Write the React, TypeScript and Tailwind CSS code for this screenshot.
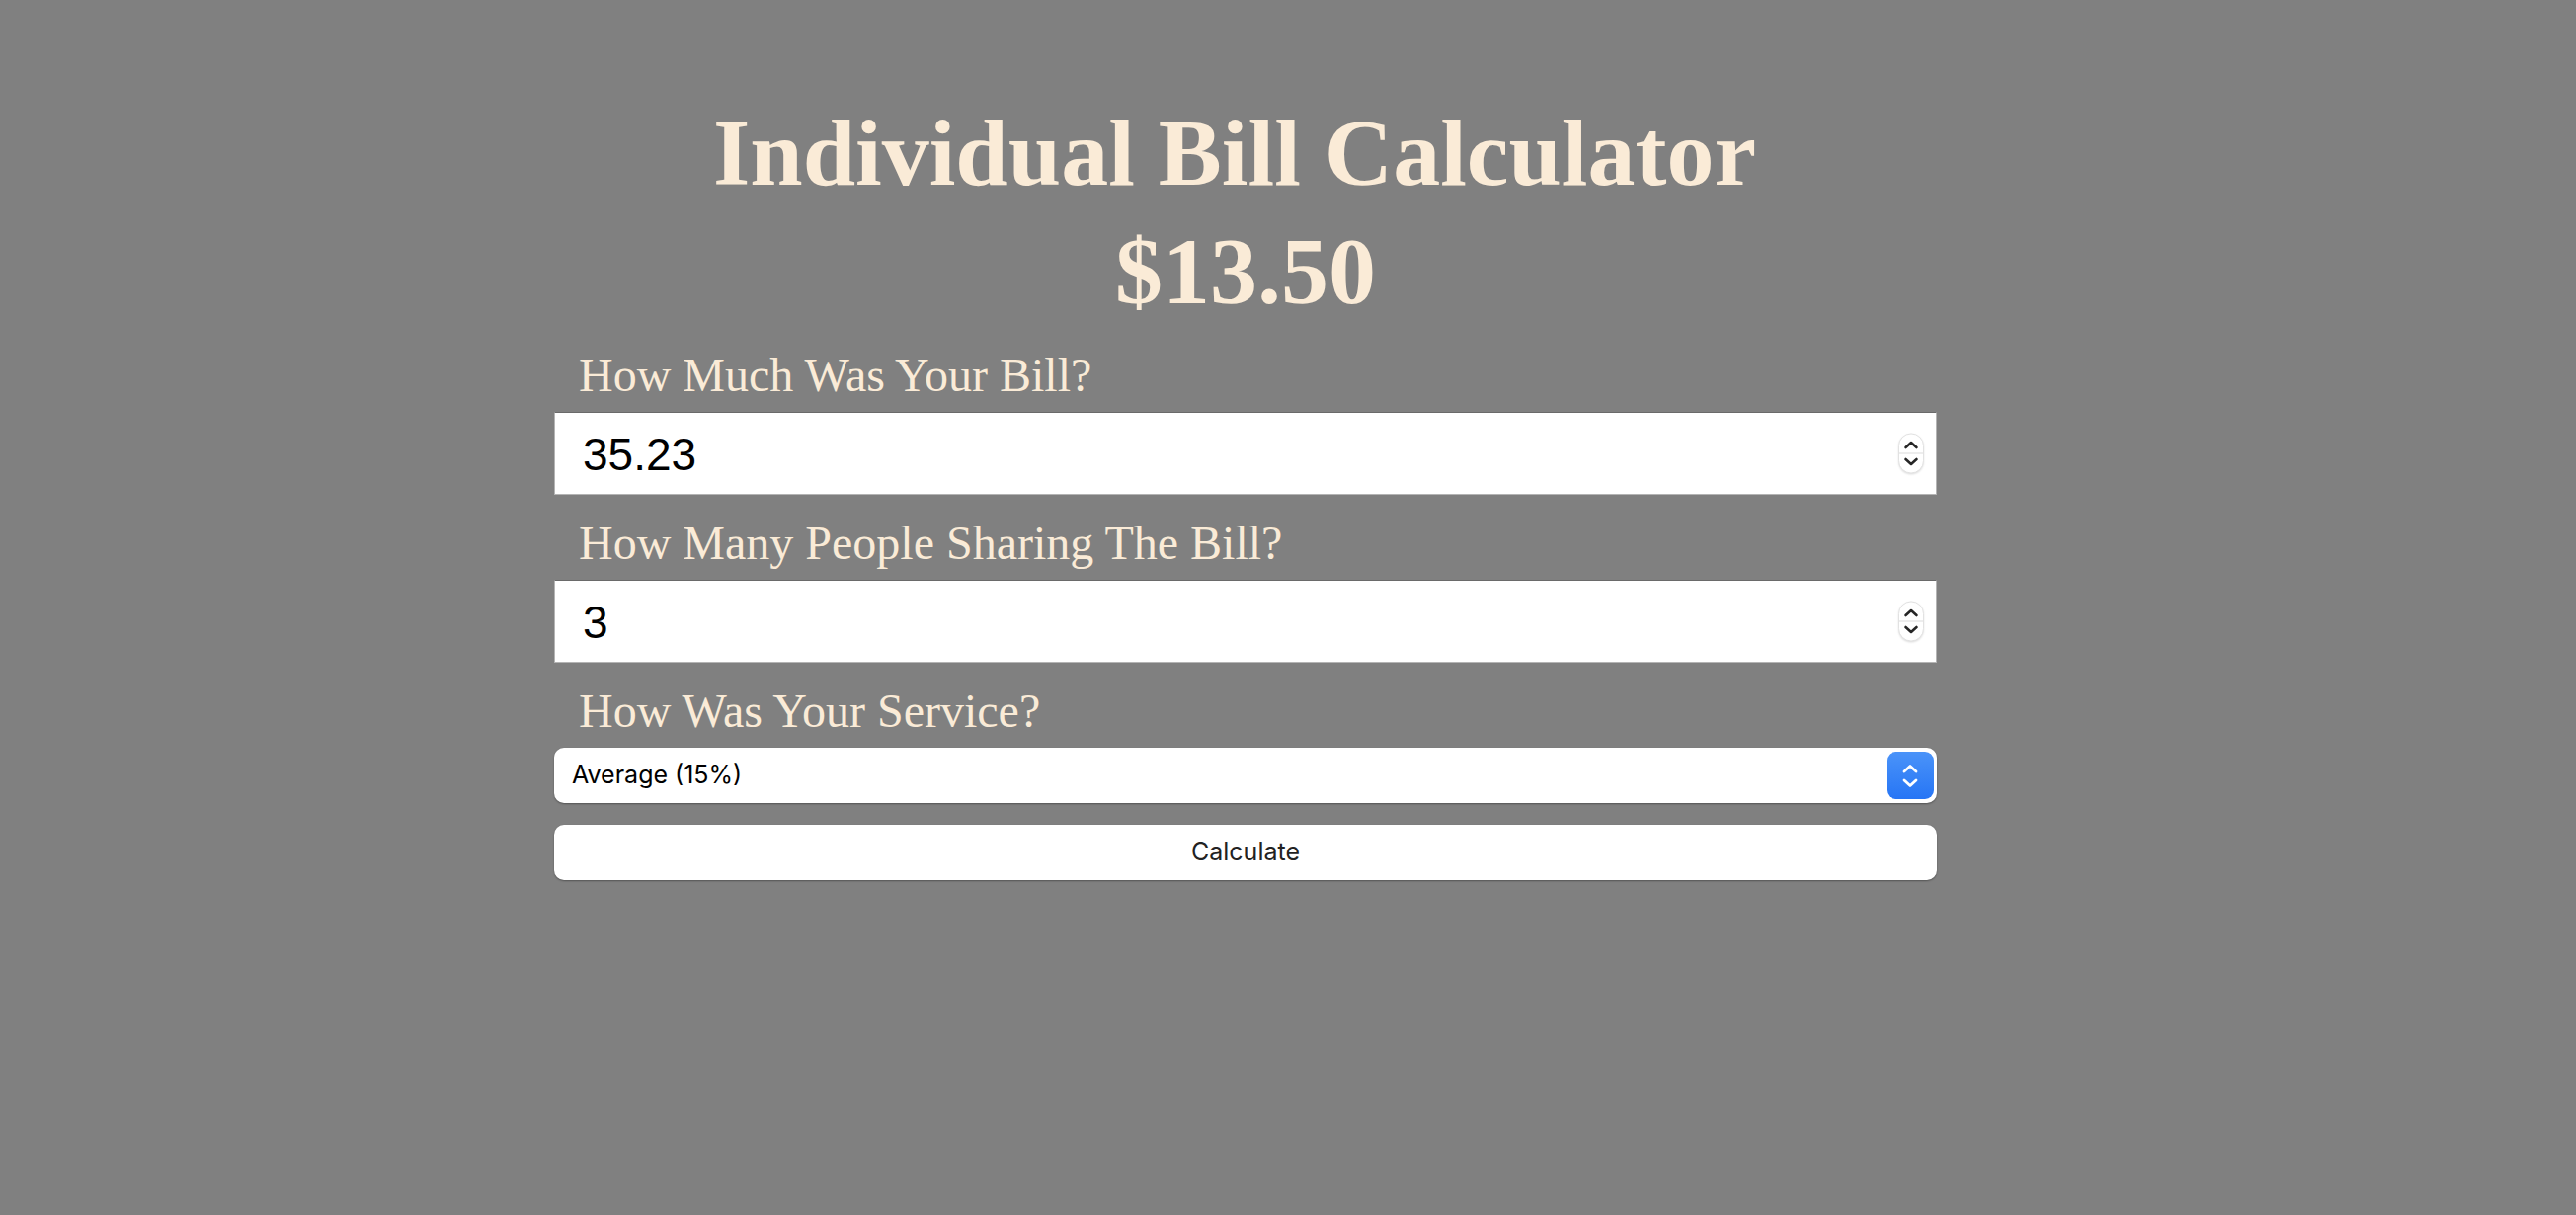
import { useState } from "react";

function Spinner() {
  return (
    <div className="pointer-events-none absolute right-[13px] top-1/2 flex h-[41px] w-[26px] -translate-y-1/2 flex-col items-center justify-center rounded-[13px] border border-[#e2e2e2] bg-white shadow-[0_1px_2px_rgba(0,0,0,0.12)]">
      <svg width="16" height="10" viewBox="0 0 16 10" className="mb-[3px]">
        <path d="M2.5 7.5 L8 2.5 L13.5 7.5" fill="none" stroke="#262626" strokeWidth="2.6" strokeLinecap="round" strokeLinejoin="round" />
      </svg>
      <div className="h-px w-full bg-[#dcdcdc]" />
      <svg width="16" height="10" viewBox="0 0 16 10" className="mt-[3px]">
        <path d="M2.5 2.5 L8 7.5 L13.5 2.5" fill="none" stroke="#262626" strokeWidth="2.6" strokeLinecap="round" strokeLinejoin="round" />
      </svg>
    </div>
  );
}

function NumberField({ label, value, onChange }: { label: string; value: string; onChange: (v: string) => void }) {
  return (
    <div className="flex flex-col">
      <label className="pl-[25px] text-[48px] leading-[55px] text-[#faebd7]">{label}</label>
      <div className="relative mt-[10px]">
        <input
          type="number"
          value={value}
          onChange={(e) => onChange(e.target.value)}
          className="h-[84px] w-full border border-[#b4b4b4] border-t-[#6a6a6a] bg-white pl-[28px] pt-[2px] font-['Liberation_Sans',Arial,sans-serif] text-[46px] text-black outline-none [appearance:textfield] [&::-webkit-inner-spin-button]:appearance-none [&::-webkit-outer-spin-button]:appearance-none"
        />
        <Spinner />
      </div>
    </div>
  );
}

export default function App() {
  const [bill, setBill] = useState("35.23");
  const [people, setPeople] = useState("3");
  const [service, setService] = useState("0.15");
  const [total, setTotal] = useState("13.50");

  const calculate = () => {
    const b = parseFloat(bill) || 0;
    const p = parseInt(people) || 1;
    const t = parseFloat(service) || 0;
    setTotal(((b * (1 + t)) / p).toFixed(2));
  };

  return (
    <div className="min-h-[1230px] w-full bg-[#808080] font-['Liberation_Serif','Times_New_Roman',serif]">
      <div className="ml-[561px] flex w-[1400px] flex-col pt-[100px]">
        <h1 className="pr-[22px] text-center text-[96px] font-bold leading-[110px] text-[#faebd7]">Individual Bill Calculator</h1>
        <h2 className="mt-[10px] text-center text-[96px] font-bold leading-[110px] text-[#faebd7]">${total}</h2>

        <div className="mt-[22px] flex flex-col gap-[21px]">
          <NumberField label="How Much Was Your Bill?" value={bill} onChange={setBill} />
          <NumberField label="How Many People Sharing The Bill?" value={people} onChange={setPeople} />

          <div className="flex flex-col">
            <label className="pl-[25px] text-[48px] leading-[55px] text-[#faebd7]">How Was Your Service?</label>
            <div className="relative mt-[10px]">
              <select
                value={service}
                onChange={(e) => setService(e.target.value)}
                className="h-[56px] w-full appearance-none rounded-[10px] bg-white pl-[18px] font-['Inter',sans-serif] text-[25px] text-black shadow-[0_1px_2px_rgba(0,0,0,0.35)] outline-none"
              >
                <option value="0.3">Outstanding (30%)</option>
                <option value="0.2">Good (20%)</option>
                <option value="0.15">Average (15%)</option>
                <option value="0.1">Poor (10%)</option>
              </select>
              <div className="pointer-events-none absolute right-[3px] top-[4px] flex h-[48px] w-[48px] flex-col items-center justify-center gap-[5px] rounded-[9px] bg-gradient-to-b from-[#4a93f9] to-[#2675f5]">
                <svg width="18" height="10" viewBox="0 0 18 10">
                  <path d="M3 8 L9 2.5 L15 8" fill="none" stroke="white" strokeWidth="2.8" strokeLinecap="round" strokeLinejoin="round" />
                </svg>
                <svg width="18" height="10" viewBox="0 0 18 10">
                  <path d="M3 2 L9 7.5 L15 2" fill="none" stroke="white" strokeWidth="2.8" strokeLinecap="round" strokeLinejoin="round" />
                </svg>
              </div>
            </div>
          </div>
        </div>

        <button
          onClick={calculate}
          className="mt-[22px] h-[56px] w-full rounded-[10px] bg-white font-['Inter',sans-serif] text-[25px] text-[#222] shadow-[0_1px_2px_rgba(0,0,0,0.35)]"
        >
          Calculate
        </button>
      </div>
    </div>
  );
}
